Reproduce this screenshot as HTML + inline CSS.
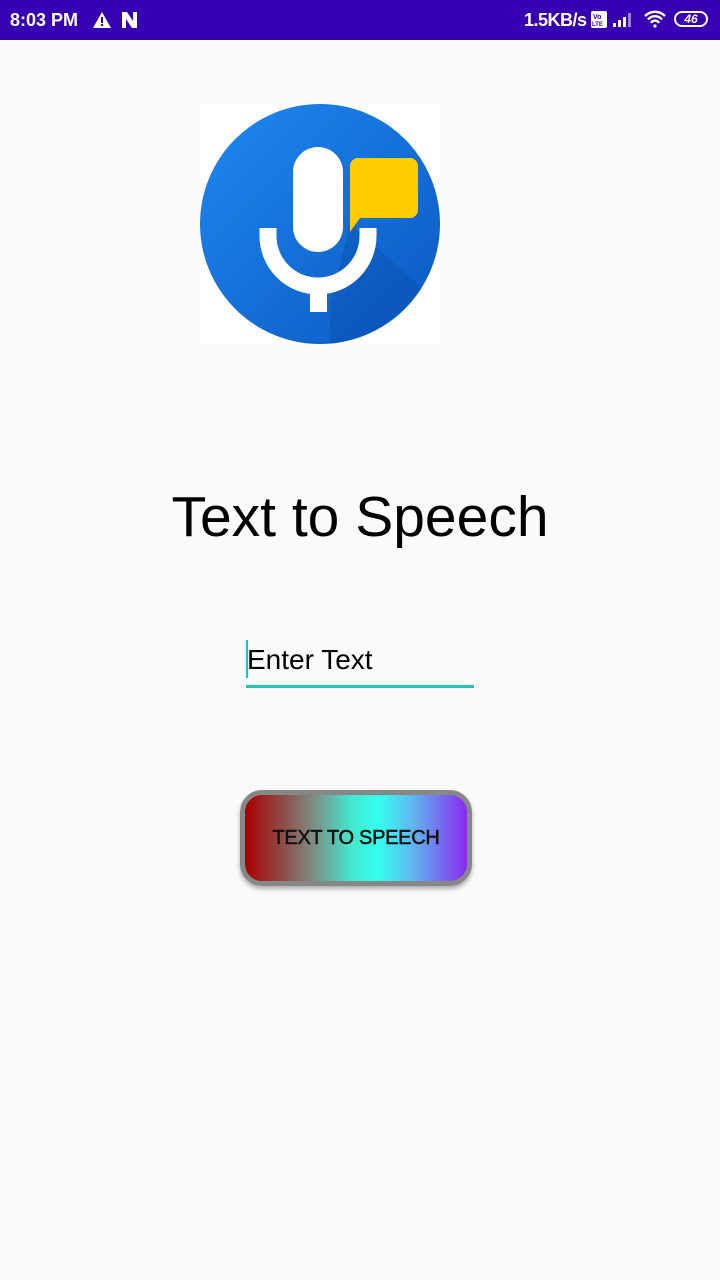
<!DOCTYPE html>
<html><head><style>
body{margin:0;width:720px;height:1280px;background:#fafafa;font-family:"Liberation Sans",sans-serif;position:relative;overflow:hidden}
.sb{position:absolute;left:0;top:0;width:720px;height:40px;background:#3700b3;color:#fff;font-weight:bold;font-size:18px}
</style></head><body>
<div class="sb">
<span style="position:absolute;left:10px;top:10px">8:03 PM</span>
<svg style="position:absolute;left:92px;top:11px" width="20" height="18"><path d="M10 1L19 17H1Z" fill="#fff"/><rect x="9" y="6" width="2" height="6" fill="#3700b3"/><rect x="9" y="13" width="2" height="2" fill="#3700b3"/></svg>
<svg style="position:absolute;left:121px;top:11px" width="18" height="18"><path d="M1 1h5l6 9V1h4v16h-5L5 8v9H1Z" fill="#fff"/></svg>
<span style="position:absolute;left:524px;top:10px;letter-spacing:-0.5px">1.5KB/s</span>
<svg style="position:absolute;left:591px;top:11px" width="18" height="18"><rect x="0" y="0" width="16" height="17" rx="2" fill="#fff"/><text x="2" y="8" font-size="7" fill="#3700b3">Vo</text><text x="1" y="15" font-size="6" fill="#3700b3">LTE</text></svg>
<svg style="position:absolute;left:612px;top:12px" width="22" height="16"><rect x="1" y="11" width="3" height="4" fill="#fff"/><rect x="6" y="8" width="3" height="7" fill="#fff"/><rect x="11" y="5" width="3" height="10" fill="#fff"/><rect x="16" y="1" width="3" height="14" fill="#fff" opacity=".5"/></svg>
<svg style="position:absolute;left:643px;top:10px" width="24" height="18"><path d="M2 6a14 14 0 0 1 20 0M5 9.5a9 9 0 0 1 14 0M8 13a4.5 4.5 0 0 1 8 0" stroke="#fff" stroke-width="2.4" fill="none"/><circle cx="12" cy="16" r="1.6" fill="#fff"/></svg>
<div style="position:absolute;left:674px;top:11px;width:34px;height:16px;border:2px solid #fff;border-radius:9px;box-sizing:border-box;font-size:12px;text-align:center;line-height:12px;font-style:italic">46</div>
</div>
<svg style="position:absolute;left:200px;top:104px" width="240" height="240">
<defs><linearGradient id="g" x1="0" y1="0" x2="1" y2="1"><stop offset="0" stop-color="#1e88f0"/><stop offset="1" stop-color="#0b58c0"/></linearGradient>
<clipPath id="c"><circle cx="120" cy="120" r="120"/></clipPath></defs>
<rect width="240" height="240" fill="#fff"/>
<circle cx="120" cy="120" r="120" fill="url(#g)"/>
<path d="M150 120L240 200L240 240L130 240L130 200Z" fill="#0a4aa8" opacity=".35" clip-path="url(#c)"/>
<rect x="93" y="43" width="50" height="105" rx="25" fill="#fff"/>
<path d="M68 124v8a50 50 0 0 0 100 0v-8" stroke="#fff" stroke-width="17" fill="none"/>
<rect x="110" y="175" width="17" height="33" fill="#fff"/>
<path d="M158 54h52a8 8 0 0 1 8 8v44a8 8 0 0 1-8 8h-50l-10 14V62a8 8 0 0 1 8-8Z" fill="#ffcc00"/>
</svg>
<div style="position:absolute;left:0;width:720px;top:484px;text-align:center;font-size:57px;color:#000">Text to Speech</div>
<div style="position:absolute;left:246px;top:640px;width:2px;height:38px;background:#1ec8b8"></div>
<div style="position:absolute;left:247px;top:644px;font-size:28px;color:#000">Enter Text</div>
<div style="position:absolute;left:246px;top:685px;width:228px;height:3px;background:#1ec8b8"></div>
<div style="position:absolute;left:240px;top:790px;width:232px;height:96px;box-sizing:border-box;border:5px solid #878787;border-radius:22px;background:linear-gradient(90deg,#a80000 0%,#8a5a55 20%,#7f8a80 30%,#44e8d0 48%,#33ffee 60%,#60b8f0 75%,#8a2af0 100%);box-shadow:0 3px 5px rgba(0,0,0,.3);text-align:center;line-height:86px;font-size:20px;letter-spacing:-0.3px;-webkit-text-stroke:0.5px #111;color:#111">TEXT TO SPEECH</div>
</body></html>
